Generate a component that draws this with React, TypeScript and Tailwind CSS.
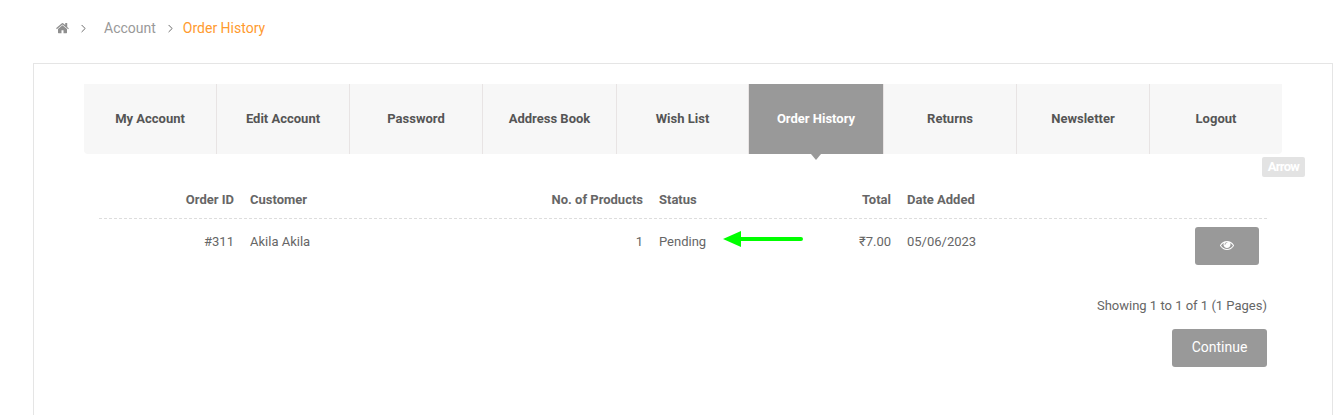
import { ChevronRight } from "lucide-react";

const TABS = [
  { label: "My Account", width: "w-[133px]" },
  { label: "Edit Account", width: "w-[133px]" },
  { label: "Password", width: "w-[133px]" },
  { label: "Address Book", width: "w-[134px]" },
  { label: "Wish List", width: "w-[132px]" },
  { label: "Order History", width: "w-[135px]", active: true },
  { label: "Returns", width: "w-[133px]" },
  { label: "Newsletter", width: "w-[133px]" },
  { label: "Logout", width: "w-[132px]" },
];

const COLS = "grid grid-cols-[143px_200px_209px_100px_148px_200px_168px]";

function HomeIcon() {
  return (
    <svg viewBox="0 0 1664 1408" className="h-[11px] w-[13px] fill-[#8f8f8f]">
      <path d="M1408 768v480q0 26-19 45t-45 19H960V928H704v384H320q-26 0-45-19t-19-45V768q0-1 .5-3t.5-3l575-474 575 474q1 2 1 6zm223-69-62 74q-8 9-21 11h-3q-13 0-21-7L832 200 140 777q-12 8-24 7-13-2-21-11l-62-74q-8-10-7-23.500t11-21.500L756 27q32-27 76-27t76 27l272 228V37q0-14 9-23t23-9h192q14 0 23 9t9 23v472l219 182q10 8 11 21.500t-7 23.500z" />
    </svg>
  );
}

function EyeIcon() {
  return (
    <svg viewBox="0 0 1792 1792" className="h-[14px] w-[14px] fill-white">
      <path d="M1664 960q-152-236-381-353 61 104 61 225 0 185-131.500 316.500T896 1280t-316.500-131.500T448 832q0-121 61-225-229 117-381 353 133 205 333.500 326.500T896 1408t434.500-121.500T1664 960zM944 576q0-20-14-34t-34-14q-125 0-214.500 89.500T592 832q0 20 14 34t34 14 34-14 14-34q0-86 61-147t147-61q20 0 34-14t14-34zm848 384q0 34-20 69-140 230-376.500 368.500T896 1536t-499.500-139T20 1029q-20-35-20-69t20-69q140-229 376.500-368T896 384t499.500 139T1772 891q20 35 20 69z" />
    </svg>
  );
}

export default function App() {
  return (
    <div className="relative h-[415px] w-[1344px] overflow-hidden bg-white font-['Roboto',sans-serif] text-[13px] text-[#666666]">
      <nav className="flex h-[63px] items-center pb-[7px] pl-[56px] text-[14px]">
        <HomeIcon />
        <ChevronRight className="ml-[8px] h-[13px] w-[13px] text-[#666666]" strokeWidth={1.75} />
        <span className="ml-[14px] text-[#999999]">Account</span>
        <ChevronRight className="ml-[8px] h-[13px] w-[13px] text-[#666666]" strokeWidth={1.75} />
        <span className="ml-[6px] text-[#ff9a2e]">Order History</span>
      </nav>

      <main className="ml-[33px] h-[400px] w-[1300px] border border-[#e5e5e5] pt-[20px] pl-[50px]">
        <ul className="flex h-[70px] w-[1198px] overflow-hidden rounded-b-[4px] bg-[#f7f7f7]">
          {TABS.map((tab) => (
            <li
              key={tab.label}
              className={`flex items-center justify-center border-r border-[#e8e4e4] font-bold last:border-r-0 ${tab.width} ${
                tab.active ? "bg-[#999999] text-white" : "text-[#555555]"
              }`}
            >
              {tab.label}
            </li>
          ))}
        </ul>

        <div className="ml-[15px] w-[1168px] pt-[30px]">
          <div className={`${COLS} h-[35px] border-b border-dashed border-[#dddddd] font-bold text-[#666666]`}>
            <div className="px-2 pt-[6px] text-right">Order ID</div>
            <div className="px-2 pt-[6px]">Customer</div>
            <div className="px-2 pt-[6px] text-right">No. of Products</div>
            <div className="px-2 pt-[6px]">Status</div>
            <div className="px-2 pt-[6px] text-right">Total</div>
            <div className="px-2 pt-[6px]">Date Added</div>
            <div />
          </div>
          <div className={`${COLS} h-[60px] items-start`}>
            <div className="px-2 pt-[13px] text-right">#311</div>
            <div className="px-2 pt-[13px]">Akila Akila</div>
            <div className="px-2 pt-[13px] text-right">1</div>
            <div className="px-2 pt-[13px]">Pending</div>
            <div className="px-2 pt-[13px] text-right">₹7.00</div>
            <div className="px-2 pt-[13px]">05/06/2023</div>
            <div className="flex justify-end px-2 pt-[8px]">
              <button className="flex h-[38px] w-[64px] items-start justify-center rounded-[3px] bg-[#999999] pt-[11px]">
                <EyeIcon />
              </button>
            </div>
          </div>
          <p className="mt-[17px] text-right">Showing 1 to 1 of 1 (1 Pages)</p>
          <div className="mt-[13px] flex justify-end">
            <button className="h-[38px] w-[95px] rounded-[3px] bg-[#999999] text-[14px] text-white">
              Continue
            </button>
          </div>
        </div>
      </main>

      {/* active tab pointer */}
      <div className="absolute top-[154px] left-[811px] h-0 w-0 border-x-[5px] border-t-[6px] border-x-transparent border-t-[#999999]" />

      {/* tooltip */}
      <div className="absolute top-[157px] left-[1262px] flex h-[20px] w-[43px] items-center justify-center rounded-[2px] bg-[#e3e3e3] text-[13px] font-bold tracking-[-0.7px] text-white">
        Arrow
      </div>

      {/* green annotation arrow */}
      <svg className="absolute top-[230px] left-[722px] h-[18px] w-[82px]" viewBox="0 0 82 18">
        <path d="M1 9 19 1V7H79a2 2 0 0 1 0 4H19V17Z" fill="#00ff00" />
      </svg>
    </div>
  );
}
